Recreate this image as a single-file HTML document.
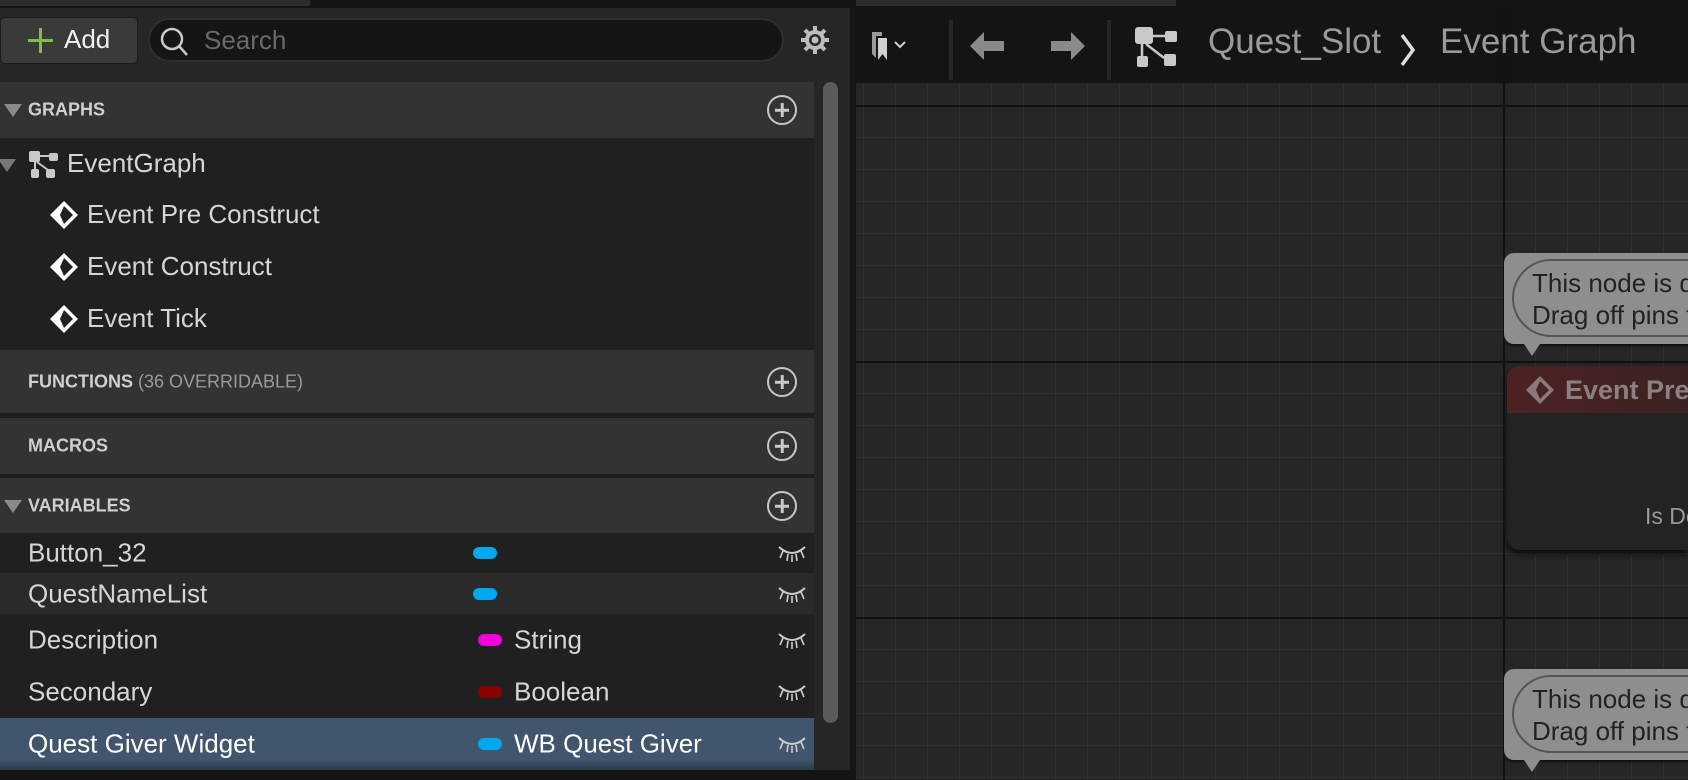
<!DOCTYPE html>
<html><head><meta charset="utf-8"><style>
*{margin:0;padding:0;box-sizing:border-box}
body{width:1688px;height:780px;overflow:hidden;background:#151515;font-family:"Liberation Sans",sans-serif;position:relative}
.a{position:absolute}
.hdr{position:absolute;left:0;width:814px;background:#333;color:#cfcfcf;font-weight:bold;font-size:18px}
.hdr span{position:absolute;left:28px;top:50%;transform:translateY(-50%)}
.plus{position:absolute;left:767px;width:30px;height:30px;border:2.5px solid #c8c8c8;border-radius:50%}
.plus:before,.plus:after{content:"";position:absolute;background:#c8c8c8;left:50%;top:50%;transform:translate(-50%,-50%)}
.plus:before{width:14px;height:2.5px}.plus:after{width:2.5px;height:14px}
.tri{position:absolute;width:0;height:0;border-left:9px solid transparent;border-right:9px solid transparent;border-top:13px solid #8a8a8a}
.row{position:absolute;left:0;width:814px;color:#d6d6d6;font-size:26px}
.row .n{position:absolute;left:28px;top:50%;transform:translateY(-50%)}
.row .p{position:absolute;left:473px;top:50%;width:24px;height:12px;margin-top:-6px;border-radius:6px}
.row .t{position:absolute;left:514px;top:50%;transform:translateY(-50%)}
.row svg.eye{position:absolute;left:777px;top:50%;margin-top:-10px}
.ev{position:absolute;left:0;color:#d6d6d6;font-size:26px}
.ev svg{position:absolute;left:49px;top:-15px}
.ev span{position:absolute;left:87px;top:-16px;white-space:nowrap}
.bub{position:absolute;left:1504px;width:200px;height:91px;background:#8e8e8e;border-radius:10px 0 0 10px;box-shadow:0 2px 2px #111}
.bub .in{position:absolute;left:8px;top:6px;width:300px;height:78px;border:2px solid #555;border-radius:39px;color:#222;font-size:26px;line-height:32px;padding:6px 0 0 18px;white-space:nowrap}
.bub .tl{position:absolute;left:20px;bottom:-12px;width:0;height:0;border-left:8px solid transparent;border-right:8px solid transparent;border-top:12px solid #8e8e8e}
</style></head><body>
<div class="a" style="left:0;top:0;width:1688px;height:8px;background:#151515"></div>
<div class="a" style="left:0;top:0;width:310px;height:6px;background:#2c2c2c"></div>
<div class="a" style="left:856px;top:0;width:320px;height:6px;background:#2c2c2c"></div>
<div class="a" style="left:0;top:8px;width:850px;height:762px;background:#262626"></div>
<div class="a" style="left:0;top:17px;width:138px;height:47px;background:#3a3a3a;border-radius:5px;border:1px solid #1a1a1a"></div>
<div class="a" style="left:28px;top:39px;width:25px;height:3px;background:#7cc142"></div>
<div class="a" style="left:39px;top:28px;width:3px;height:25px;background:#7cc142"></div>
<div class="a" style="left:64px;top:24px;color:#f0f0f0;font-size:26px">Add</div>
<div class="a" style="left:148px;top:18px;width:636px;height:44px;background:#151515;border:2px solid #2f2f2f;border-radius:22px"></div>
<svg class="a" style="left:157px;top:24px" width="34" height="34" viewBox="0 0 34 34"><circle cx="15" cy="15" r="10" fill="none" stroke="#c8c8c8" stroke-width="2.5"/><path d="M22 22 L30 31" stroke="#c8c8c8" stroke-width="2.5"/></svg>
<div class="a" style="left:204px;top:25px;color:#6a6a6a;font-size:26px">Search</div>
<svg class="a" style="left:799px;top:24px" width="32" height="32" viewBox="0 0 32 32"><g fill="#bdbdbd"><circle cx="16" cy="16" r="10"/><g stroke="#bdbdbd" stroke-width="4"><path d="M16 2v28M2 16h28M6 6l20 20M26 6L6 26"/></g></g><circle cx="16" cy="16" r="6" fill="#262626"/><circle cx="16" cy="16" r="3.5" fill="#bdbdbd"/></svg>
<div class="a" style="left:823px;top:82px;width:15px;height:641px;background:#5b5b5b;border-radius:8px"></div>
<div class="hdr" style="top:82px;height:56px"><span>GRAPHS</span></div>
<div class="tri" style="left:4px;top:104px"></div>
<div class="plus" style="top:95px"></div>
<div class="a" style="left:0;top:138px;width:814px;height:212px;background:#202020"></div>
<div class="tri" style="left:-2px;top:159px;border-top-color:#777"></div>
<svg class="a" style="left:28px;top:150px" width="32" height="30" viewBox="0 0 32 30"><g fill="#c8c8c8"><rect x="1" y="1" width="11" height="11" rx="2"/><rect x="21" y="3" width="9" height="8" rx="2"/><rect x="3" y="19" width="8" height="9" rx="2"/><rect x="18" y="19" width="9" height="9" rx="2"/></g><path d="M12 6h9M7 12v7M9 12l11 8" stroke="#c8c8c8" stroke-width="2"/></svg>
<div class="a" style="left:67px;top:148px;color:#d6d6d6;font-size:26px">EventGraph</div>
<div class="ev" style="top:215px"><svg width="30" height="30" viewBox="0 0 30 30"><path d="M15 1L29 15 15 29 1 15Z" fill="#fff"/><path d="M15 6L24 15 15 24 11 15Z" fill="#202020"/></svg><span>Event Pre Construct</span></div>
<div class="ev" style="top:267px"><svg width="30" height="30" viewBox="0 0 30 30"><path d="M15 1L29 15 15 29 1 15Z" fill="#fff"/><path d="M15 6L24 15 15 24 11 15Z" fill="#202020"/></svg><span>Event Construct</span></div>
<div class="ev" style="top:319px"><svg width="30" height="30" viewBox="0 0 30 30"><path d="M15 1L29 15 15 29 1 15Z" fill="#fff"/><path d="M15 6L24 15 15 24 11 15Z" fill="#202020"/></svg><span>Event Tick</span></div>
<div class="a" style="left:0;top:350px;width:814px;height:128px;background:#1e1e1e"></div>
<div class="hdr" style="top:350px;height:63px"><span>FUNCTIONS <span style="position:static;font-weight:normal;color:#9a9a9a">(36 OVERRIDABLE)</span></span></div>
<div class="plus" style="top:367px"></div>
<div class="hdr" style="top:418px;height:56px"><span>MACROS</span></div>
<div class="plus" style="top:431px"></div>
<div class="hdr" style="top:478px;height:55px"><span>VARIABLES</span></div>
<div class="tri" style="left:4px;top:500px"></div>
<div class="plus" style="top:491px"></div>
<div class="row" style="top:533px;height:40px;background:#202020"><span class="n">Button_32</span><i class="p" style="background:#00a8f0"></i><svg class="eye" width="30" height="20"><path d="M2 4Q15 16 28 4" fill="none" stroke="#ccc" stroke-width="2"/><path d="M6 8L3 15M11 11L10 18M15 12V19M19 11L20 18M24 8L27 15" stroke="#ccc" stroke-width="1.6"/></svg></div>
<div class="row" style="top:573px;height:41px;background:#2a2a2a"><span class="n">QuestNameList</span><i class="p" style="background:#00a8f0"></i><svg class="eye" width="30" height="20"><path d="M2 4Q15 16 28 4" fill="none" stroke="#ccc" stroke-width="2"/><path d="M6 8L3 15M11 11L10 18M15 12V19M19 11L20 18M24 8L27 15" stroke="#ccc" stroke-width="1.6"/></svg></div>
<div class="row" style="top:614px;height:52px;background:#202020"><span class="n">Description</span><i class="p" style="background:#f000d8;left:478px"></i><span class="t">String</span><svg class="eye" width="30" height="20"><path d="M2 4Q15 16 28 4" fill="none" stroke="#ccc" stroke-width="2"/><path d="M6 8L3 15M11 11L10 18M15 12V19M19 11L20 18M24 8L27 15" stroke="#ccc" stroke-width="1.6"/></svg></div>
<div class="row" style="top:666px;height:52px;background:#202020"><span class="n">Secondary</span><i class="p" style="background:#8a0000;left:478px"></i><span class="t">Boolean</span><svg class="eye" width="30" height="20"><path d="M2 4Q15 16 28 4" fill="none" stroke="#ccc" stroke-width="2"/><path d="M6 8L3 15M11 11L10 18M15 12V19M19 11L20 18M24 8L27 15" stroke="#ccc" stroke-width="1.6"/></svg></div>
<div class="row" style="top:718px;height:52px;background:linear-gradient(#41566d 0,#41566d 80%,#2a3a4a 100%);color:#fff"><span class="n">Quest Giver Widget</span><i class="p" style="background:#00a8f0;left:478px"></i><span class="t">WB Quest Giver</span><svg class="eye" width="30" height="20"><path d="M2 4Q15 16 28 4" fill="none" stroke="#ccc" stroke-width="2"/><path d="M6 8L3 15M11 11L10 18M15 12V19M19 11L20 18M24 8L27 15" stroke="#ccc" stroke-width="1.6"/></svg></div>
<div class="a" style="left:0;top:770px;width:850px;height:10px;background:#141414"></div>
<div class="a" style="left:856px;top:8px;width:832px;height:772px;background-color:#262626;
background-image:linear-gradient(#111 2px,transparent 2px),linear-gradient(90deg,#313131 1px,transparent 1px),linear-gradient(#313131 1px,transparent 1px);
background-size:256px 256px,32px 32px,32px 32px;
background-position:0 97px,7px 1px,7px 1px"></div>
<div class="a" style="left:1503px;top:8px;width:2px;height:772px;background:#111"></div>
<div class="a" style="left:856px;top:8px;width:832px;height:75px;background:rgba(18,18,18,0.92)"></div>
<svg class="a" style="left:870px;top:28px" width="40" height="36" viewBox="0 0 40 36"><path d="M2 4h10v4h-6v22l-4-4z" fill="#9a9a9a"/><path d="M8 10h9v22l-4.5-6-4.5 6z" fill="#d0d0d0"/><path d="M25 14l5 5 5-5" fill="none" stroke="#d0d0d0" stroke-width="2"/></svg>
<div class="a" style="left:949px;top:20px;width:4px;height:60px;background:#262626"></div>
<svg class="a" style="left:968px;top:30px" width="40" height="32" viewBox="0 0 40 32"><path d="M2 16L16 2v9h20v10H16v9z" fill="#8a8a8a"/></svg>
<svg class="a" style="left:1047px;top:30px" width="40" height="32" viewBox="0 0 40 32"><path d="M38 16L24 2v9H4v10h20v9z" fill="#8a8a8a"/></svg>
<div class="a" style="left:1107px;top:20px;width:4px;height:60px;background:#262626"></div>
<svg class="a" style="left:1134px;top:26px" width="44" height="42" viewBox="0 0 44 42"><g fill="#c8c8c8"><rect x="1" y="1" width="18" height="17" rx="3"/><rect x="31" y="5" width="12" height="11" rx="2"/><rect x="3" y="30" width="11" height="11" rx="2"/><rect x="30" y="28" width="12" height="12" rx="2"/></g><path d="M18 10h13M8 18v12M12 18l18 14" stroke="#c8c8c8" stroke-width="2.5"/></svg>
<div class="a" style="left:1208px;top:22px;color:#9a9a9a;font-size:35px;white-space:nowrap">Quest_Slot</div>
<svg class="a" style="left:1398px;top:32px" width="20" height="36" viewBox="0 0 20 36"><path d="M4 3L15 18 4 33" fill="none" stroke="#ddd" stroke-width="3.5"/></svg>
<div class="a" style="left:1440px;top:22px;color:#9a9a9a;font-size:35px;white-space:nowrap">Event Graph</div>
<div class="bub" style="top:253px"><div class="in">This node is disabled and will not be called.<br>Drag off pins to build functionality.</div><div class="tl"></div></div>
<div class="bub" style="top:669px"><div class="in">This node is disabled and will not be called.<br>Drag off pins to build functionality.</div><div class="tl"></div></div>
<div class="a" style="left:1507px;top:366px;width:181px;height:184px;background:#232323;border-radius:12px 0 0 12px;box-shadow:0 4px 6px #0c0c0c;overflow:hidden">
<div style="height:47px;background:linear-gradient(90deg,#4e2222,#3a2222)"></div></div>
<svg class="a" style="left:1525px;top:375px" width="30" height="30" viewBox="0 0 30 30"><path d="M15 1L29 15 15 29 1 15Z" fill="#8a7a7a"/><path d="M15 6L24 15 15 24 11 15Z" fill="#4a2222"/></svg>
<div class="a" style="left:1565px;top:375px;color:#8a8080;font-size:27px;font-weight:bold;white-space:nowrap">Event Pre Construct</div>
<div class="a" style="left:1645px;top:503px;color:#9a9a9a;font-size:23px;white-space:nowrap">Is Design Time</div>
</body></html>
